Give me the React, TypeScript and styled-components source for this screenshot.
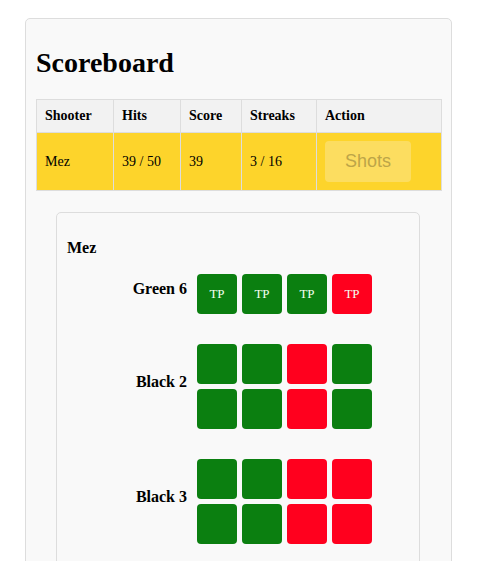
import React from "react";
import styled, { createGlobalStyle } from "styled-components";

const Global = createGlobalStyle`
  html, body { margin: 0; padding: 0; background: #ffffff; }
  body { font-family: "Liberation Serif", "Times New Roman", serif; color: #000; }
`;

const Page = styled.div`
  padding: 18px 27px 0 25px;
`;

const Card = styled.div`
  background: #f9f9f9;
  border: 1px solid #dddddd;
  border-radius: 5px;
  padding: 10px 10px 20px;
`;

const Title = styled.h1`
  font-size: 28px;
  line-height: 32px;
  font-weight: bold;
  margin: 18px 0 20px;
`;

const Table = styled.table`
  width: 405px;
  border-collapse: collapse;
  table-layout: fixed;
  font-size: 14px;
`;

const Th = styled.th`
  background: #f2f2f2;
  border: 1px solid #dddddd;
  padding: 8px;
  line-height: 16px;
  text-align: left;
  font-weight: bold;
`;

const Tr = styled.tr<{ $highlight?: boolean }>`
  background: ${(p) => (p.$highlight ? "#fdd42b" : "transparent")};
`;

const Td = styled.td`
  border: 1px solid #dddddd;
  padding: 8px;
  line-height: 16px;
  text-align: left;
`;

const ShotsButton = styled.button`
  font-family: "Liberation Sans", Arial, sans-serif;
  font-size: 18px;
  line-height: 21px;
  padding: 10px 20px;
  width: 86px;
  height: 41px;
  border: none;
  border-radius: 4px;
  background: #fcdd60;
  color: #bda548;
  display: block;
`;

const Detail = styled.div`
  margin: 21px 21px 0 20px;
  border: 1px solid #dddddd;
  border-radius: 5px;
  background: #f9f9f9;
  padding: 10px 10px 40px;
`;

const Name = styled.h3`
  font-size: 16px;
  line-height: 18px;
  font-weight: bold;
  margin: 16px 0 17px;
`;

const Rows = styled.div`
  display: flex;
  flex-direction: column;
  gap: 30px;
`;

const Row = styled.div`
  display: flex;
  align-items: center;
  gap: 10px;
`;

const Label = styled.div`
  width: 120px;
  text-align: right;
  font-size: 16px;
  line-height: 18px;
  font-weight: bold;
  padding-bottom: 10px;
`;

const Grid = styled.div`
  display: grid;
  grid-template-columns: repeat(4, 40px);
  gap: 5px;
`;

const Tile = styled.div<{ $hit: boolean }>`
  width: 40px;
  height: 40px;
  border-radius: 4px;
  background: ${(p) => (p.$hit ? "#0b7f10" : "#ff001e")};
  color: #f4fff0;
  font-size: 13px;
  display: flex;
  align-items: center;
  justify-content: center;
`;

type Station = { name: string; shots: { hit: boolean; label?: string }[] };

const stations: Station[] = [
  {
    name: "Green 6",
    shots: [
      { hit: true, label: "TP" },
      { hit: true, label: "TP" },
      { hit: true, label: "TP" },
      { hit: false, label: "TP" },
    ],
  },
  {
    name: "Black 2",
    shots: [true, true, false, true, true, true, false, true].map((hit) => ({ hit })),
  },
  {
    name: "Black 3",
    shots: [true, true, false, false, true, true, false, false].map((hit) => ({ hit })),
  },
];

export default function App() {
  return (
    <>
      <Global />
      <Page>
        <Card>
          <Title>Scoreboard</Title>
          <Table>
            <colgroup>
              <col style={{ width: 77 }} />
              <col style={{ width: 67 }} />
              <col style={{ width: 61 }} />
              <col style={{ width: 75 }} />
              <col style={{ width: 125 }} />
            </colgroup>
            <thead>
              <tr>
                <Th>Shooter</Th>
                <Th>Hits</Th>
                <Th>Score</Th>
                <Th>Streaks</Th>
                <Th>Action</Th>
              </tr>
            </thead>
            <tbody>
              <Tr $highlight>
                <Td>Mez</Td>
                <Td>39 / 50</Td>
                <Td>39</Td>
                <Td>3 / 16</Td>
                <Td>
                  <ShotsButton disabled>Shots</ShotsButton>
                </Td>
              </Tr>
            </tbody>
          </Table>
          <Detail>
            <Name>Mez</Name>
            <Rows>
              {stations.map((s) => (
                <Row key={s.name}>
                  <Label>{s.name}</Label>
                  <Grid>
                    {s.shots.map((shot, i) => (
                      <Tile key={i} $hit={shot.hit}>
                        {shot.label}
                      </Tile>
                    ))}
                  </Grid>
                </Row>
              ))}
            </Rows>
          </Detail>
        </Card>
      </Page>
    </>
  );
}
